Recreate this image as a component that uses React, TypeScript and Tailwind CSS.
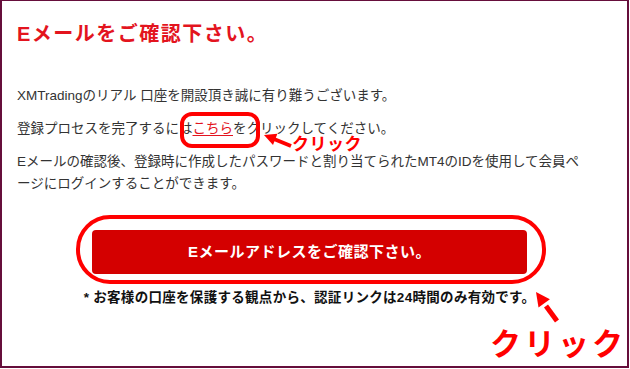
import React from "react";

const jp = "font-['Liberation_Sans','Noto_Sans_CJK_JP',sans-serif]";

export default function App() {
  return (
    <div className={`relative w-[630px] h-[369px] bg-white ${jp}`}>
      {/* Mail frame */}
      <div className="w-[629px] h-[368px] border-l-2 border-r-2 border-b-2 border-t border-[#660e3b] pl-[15px] pr-[25px] pt-[19px]">
        <h1 className="text-[20px] leading-[28px] font-bold tracking-[1.5px] text-[#e3141e]">
          Eメールをご確認下さい。
        </h1>

        <p className="mt-[37px] text-[13.5px] leading-[22px] text-[#333]">
          XMTradingのリアル 口座を開設頂き誠に有り難うございます。
        </p>
        <p className="mt-[11px] text-[13.5px] leading-[22px] text-[#333]">
          登録プロセスを完了するには
          <a className="text-[#e3141e] underline underline-offset-2">こちら</a>
          をクリックしてください。
        </p>
        <p className="mt-[11px] text-[13.5px] leading-[22px] text-[#333]">
          Eメールの確認後、登録時に作成したパスワードと割り当てられたMT4のIDを使用して会員ペ
          <br />
          ージにログインすることができます。
        </p>

        <div className="mt-[35px] flex justify-center">
          <button className="w-[435px] h-[44px] rounded-[4px] bg-[#d40000] text-white text-[15px] font-bold tracking-[0.5px]">
            Eメールアドレスをご確認下さい。
          </button>
        </div>

        <p className="mt-[15px] text-center text-[13.5px] leading-[18px] font-bold tracking-[0.3px] text-[#111]">
          * お客様の口座を保護する観点から、認証リンクは24時間のみ有効です。
        </p>
      </div>

      {/* Annotations drawn over the mail */}
      <svg className="absolute left-0 top-0" width="630" height="369" viewBox="0 0 630 369">
        <rect x="182" y="114" width="76" height="32" rx="10" fill="none" stroke="#ff0000" strokeWidth="4" />
        <line x1="291" y1="146" x2="274" y2="139" stroke="#ff0000" strokeWidth="4" />
        <polygon points="264,135 277.4,133.8 273,145" fill="#ff0000" />

        <rect x="78" y="217" width="466" height="65" rx="32" fill="none" stroke="#ff0000" strokeWidth="4" />
        <line x1="546" y1="306" x2="557" y2="321" stroke="#ff0000" strokeWidth="5" />
        <polygon points="536,292 549.9,299.2 538.5,307.4" fill="#ff0000" />
      </svg>

      <span className="absolute left-[292px] top-[136px] text-[17px] leading-[17px] font-bold tracking-[0.5px] text-[#ff0000]">
        クリック
      </span>
      <span className="absolute left-[490px] top-[325px] text-[31px] leading-[40px] font-bold tracking-[3px] text-[#ff0000]">
        クリック
      </span>
    </div>
  );
}
